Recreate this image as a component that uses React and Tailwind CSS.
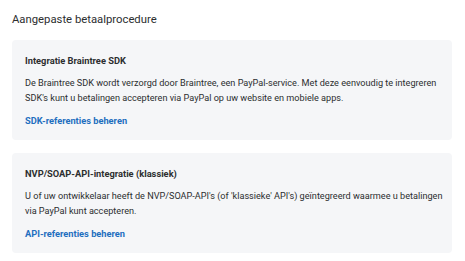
export default function App() {
  const cards = [
    {
      title: 'Integratie Braintree SDK',
      body: "De Braintree SDK wordt verzorgd door Braintree, een PayPal-service. Met deze eenvoudig te integreren SDK's kunt u betalingen accepteren via PayPal op uw website en mobiele apps.",
      link: 'SDK-referenties beheren',
    },
    {
      title: 'NVP/SOAP-API-integratie (klassiek)',
      body: "U of uw ontwikkelaar heeft de NVP/SOAP-API's (of 'klassieke' API's) geïntegreerd waarmee u betalingen via PayPal kunt accepteren.",
      link: 'API-referenties beheren',
    },
  ]

  return (
    <div className="w-[465px] h-[261px] bg-white px-3 pt-[9px] font-['Roboto',sans-serif] text-[#2c2e2f]">
      <h1 className="text-[11.3px] leading-[22px] text-[#2c2e2f]">Aangepaste betaalprocedure</h1>
      <div className="mt-[9px] w-[440px] flex flex-col gap-[13px]">
        {cards.map(c => (
          <div key={c.title} className="bg-[#f5f6f8] rounded pl-[13px] pr-[6px] pt-[13px] pb-[11px]">
            <h2 className="text-[9.3px] font-bold leading-4">{c.title}</h2>
            <p className="mt-[7px] text-[9.15px] leading-[15px]">{c.body}</p>
            <a href="#" className="block mt-[7px] text-[9.25px] font-bold leading-4 text-[#1f6fbf]">{c.link}</a>
          </div>
        ))}
      </div>
    </div>
  )
}
